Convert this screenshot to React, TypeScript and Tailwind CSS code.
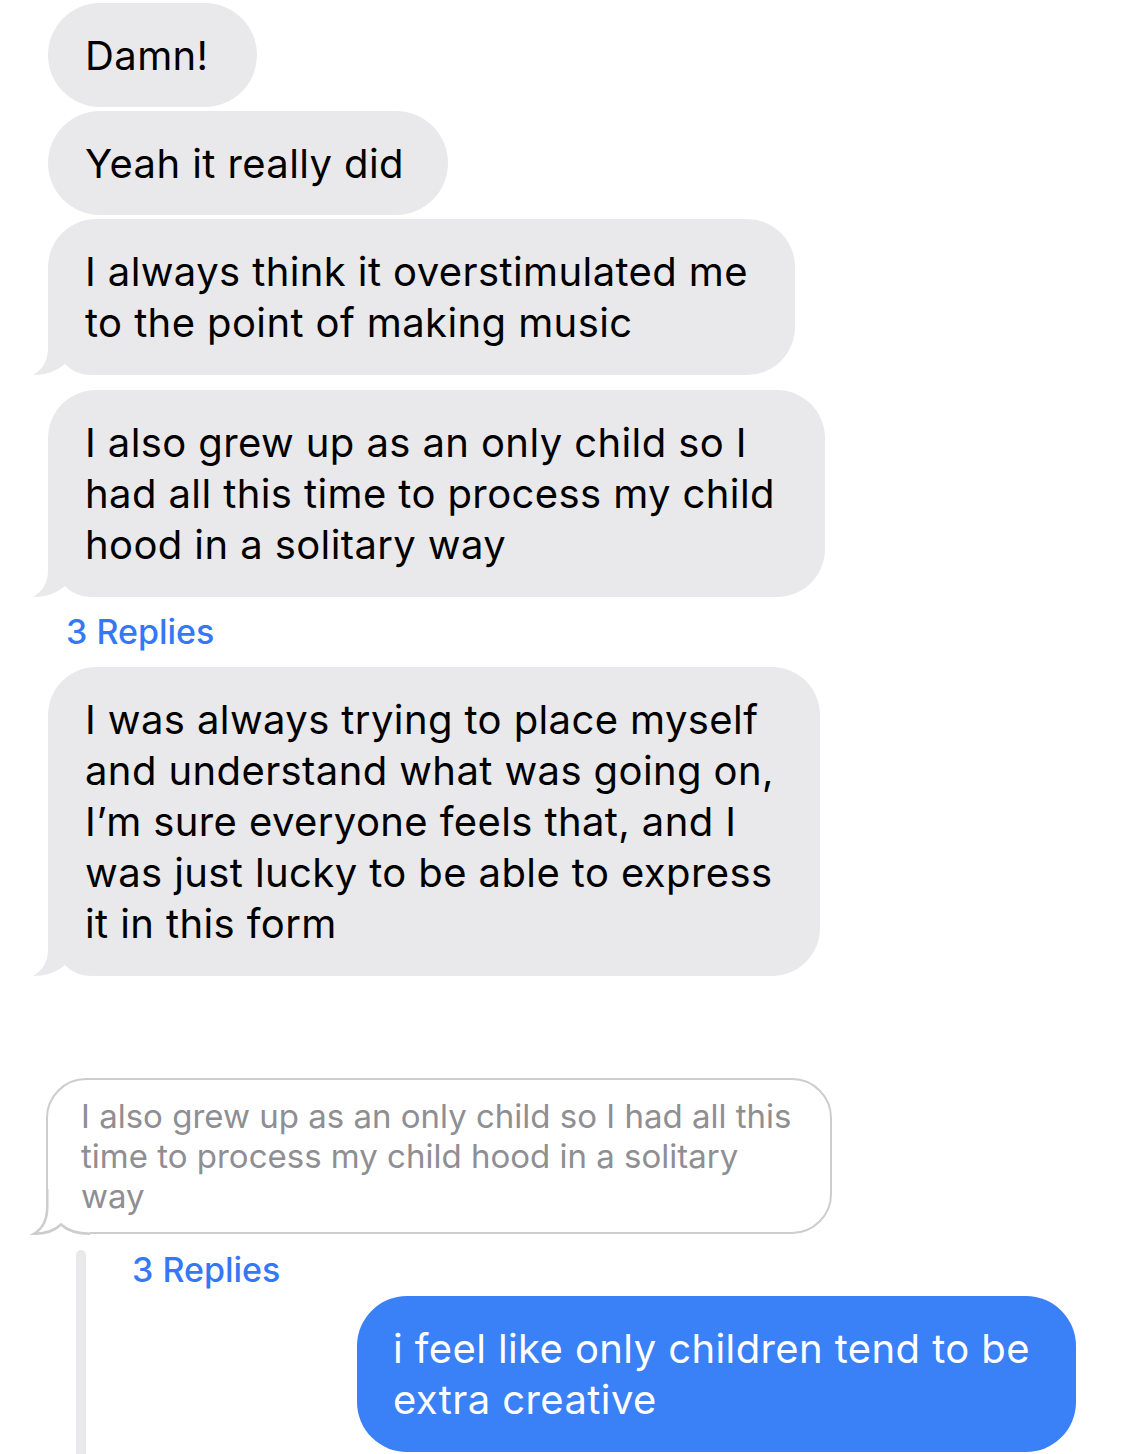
import React from "react";

const GREY = "#e9e9eb";

type Lines = { lines: string[] };

const Tail: React.FC<{ color: string }> = ({ color }) => (
  <svg
    className="absolute left-[-16px] bottom-0"
    width="60"
    height="46"
    viewBox="0 0 60 46"
  >
    <path
      d="M16 0 V20 C16 33 9 41.5 1 46 C12 46 24 43 33 35 C40 42 48 46 60 46 V0 Z"
      fill={color}
    />
  </svg>
);

const Bubble: React.FC<Lines & { width: string; tail?: boolean; className?: string }> = ({
  lines,
  width,
  tail,
  className = "",
}) => (
  <div
    className={`relative bg-[#e9e9eb] rounded-[48px] px-[37px] pt-[27px] pb-[27px] text-[40px] leading-[51px] tracking-[0.4px] text-black ${width} ${className}`}
  >
    {tail && <Tail color={GREY} />}
    <div className="relative">
      {lines.map((l) => (
        <div key={l} className="whitespace-nowrap">
          {l}
        </div>
      ))}
    </div>
  </div>
);

const Replies: React.FC<{ className?: string }> = ({ className = "" }) => (
  <div className={`text-[34px] leading-[36px] font-medium text-[#3478f6] ${className}`}>
    3 Replies
  </div>
);

const QuotedBubble: React.FC = () => (
  <div className="relative w-[786px] -ml-[2px] mt-[102px] rounded-[40px] border-[2.5px] border-[#cdcdcf] bg-white pl-[33px] pr-[20px] pt-[16px] pb-[16px] text-[33px] leading-[40px] text-[#8e8e93]">
    <svg
      className="absolute left-[-18.5px] bottom-[-2.5px]"
      width="60"
      height="46"
      viewBox="0 0 60 46"
    >
      <path
        d="M17.25 0 V18 C17.25 32 12 40 4 44.75 C15 45 24 42 31 35.5 C38 42 46 44.75 60 44.75 V0 Z"
        fill="#fff"
      />
      <path
        d="M17.25 0 V18 C17.25 32 12 40 4 44.75 C15 45 24 42 31 35.5 C38 42 46 44.75 60 44.75"
        fill="none"
        stroke="#cdcdcf"
        strokeWidth="2.5"
      />
    </svg>
    <div className="relative">
      <div className="whitespace-nowrap">I also grew up as an only child so I had all this</div>
      <div className="whitespace-nowrap">time to process my child hood in a solitary</div>
      <div className="whitespace-nowrap">way</div>
    </div>
  </div>
);

export default function App() {
  return (
    <div className="w-[1125px] h-[1454px] overflow-hidden bg-white font-['Inter','Liberation_Sans',sans-serif] pl-[48px] pt-[3px]">
      <div className="flex flex-col items-start">
        <Bubble width="w-[209px]" lines={["Damn!"]} className="rounded-[52px] !pb-[26px]" />
        <Bubble width="w-[400px]" lines={["Yeah it really did"]} className="mt-[4px] rounded-[52px] !pb-[26px]" />
        <Bubble
          width="w-[747px]"
          tail
          className="mt-[4px]"
          lines={["I always think it overstimulated me", "to the point of making music"]}
        />
        <Bubble
          width="w-[777px]"
          tail
          className="mt-[15px]"
          lines={[
            "I also grew up as an only child so I",
            "had all this time to process my child",
            "hood in a solitary way",
          ]}
        />
        <Replies className="ml-[18px] mt-[17px]" />
        <Bubble
          width="w-[772px]"
          tail
          className="mt-[17px]"
          lines={[
            "I was always trying to place myself",
            "and understand what was going on,",
            "I’m sure everyone feels that, and I",
            "was just lucky to be able to express",
            "it in this form",
          ]}
        />
        <QuotedBubble />

        <div className="flex mt-[16px] w-full h-[220px]">
          <div className="ml-[28px] w-[10px] self-stretch rounded-t-full bg-[#e9e9eb]" />
          <div className="flex flex-col ml-[46px]">
            <Replies className="mt-[2px]" />
            <div className="mt-[8px] ml-[225px] w-[719px] rounded-[50px] bg-[#3a80f6] px-[36px] py-[27px] text-[40px] leading-[51px] tracking-[0.4px] text-white">
              <div className="whitespace-nowrap">i feel like only children tend to be</div>
              <div className="whitespace-nowrap">extra creative</div>
            </div>
          </div>
        </div>
      </div>
    </div>
  );
}
